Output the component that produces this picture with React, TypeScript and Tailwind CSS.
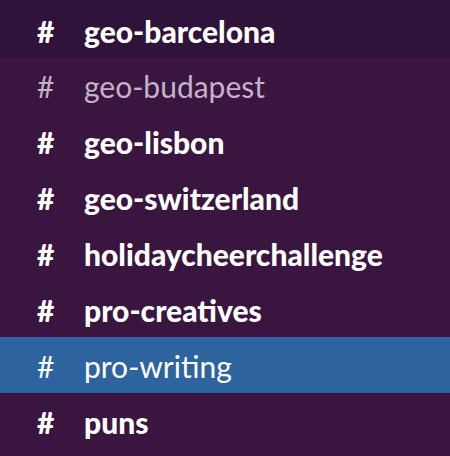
const channels = [
  { name: "geo-barcelona", unread: true },
  { name: "geo-budapest", unread: false },
  { name: "geo-lisbon", unread: true },
  { name: "geo-switzerland", unread: true },
  { name: "holidaycheerchallenge", unread: true },
  { name: "pro-creatives", unread: true },
  { name: "pro-writing", unread: false, active: true },
  { name: "puns", unread: true },
];

const ChannelRow = ({ name, unread, active, first }: { name: string; unread: boolean; active?: boolean; first?: boolean }) => {
  const bg = active ? "bg-[#2d64a0]" : first ? "bg-[#30133a]" : "";
  const color = active ? "text-white" : unread ? "text-white" : "text-[#c2b3c6]";
  return (
    <div className={`flex items-center ${first ? "h-[57px] pt-[4px]" : "h-[56px] pt-[2px]"} ${bg} ${color}`}>
      <span className={`w-[47px] ml-[37px] ${unread ? "font-black" : "font-normal"}`}>#</span>
      <span className={unread ? "font-black" : "font-normal"}>{name}</span>
    </div>
  );
};

export default function App() {
  return (
    <div className="w-[450px] h-[456px] bg-[#3a1540] overflow-hidden text-[30px] leading-none font-['Lato',sans-serif]">
      {channels.map((c, i) => (
        <ChannelRow key={c.name} name={c.name} unread={c.unread} active={c.active} first={i === 0} />
      ))}
    </div>
  );
}
